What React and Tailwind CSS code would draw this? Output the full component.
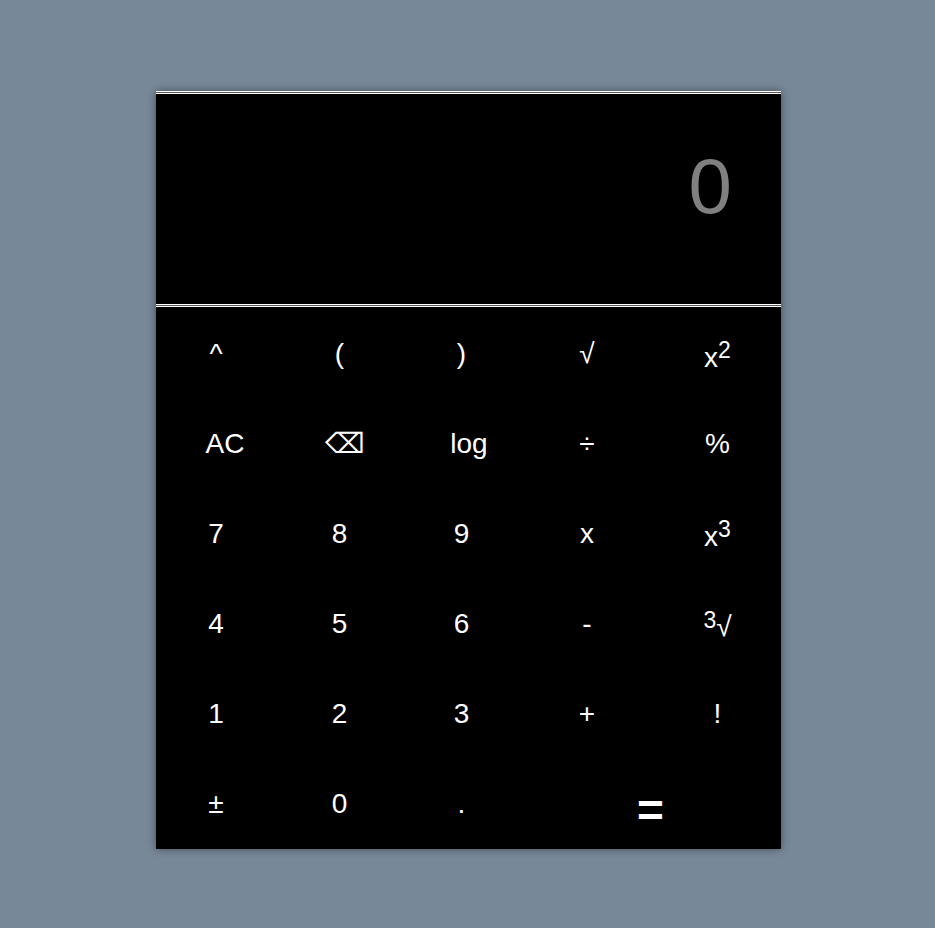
import React from 'react';

const keys = [
    { label: '^' },
    { label: '(' },
    { label: ')' },
    { label: '√' },
    { label: 'x', sup: '2', cls: 'pt-[8px]' },
    { label: 'AC', cls: 'pl-[18px]' },
    { label: '⌫', cls: 'pl-[11px]' },
    { label: 'log', cls: 'pl-[15px]' },
    { label: '÷' },
    { label: '%' },
    { label: '7' },
    { label: '8' },
    { label: '9' },
    { label: 'x' },
    { label: 'x', sup: '3', cls: 'pt-[6px]' },
    { label: '4' },
    { label: '5' },
    { label: '6' },
    { label: '-' },
    { pre: '3', label: '√', cls: 'pt-[6px]' },
    { label: '1' },
    { label: '2' },
    { label: '3' },
    { label: '+' },
    { label: '!' },
    { label: '±' },
    { label: '0' },
    { label: '.' },
];

const Key = ({ k }) => (
    <button className={`flex items-center justify-center text-white text-[28px] ${k.cls || ''}`}>
        <span>
            {k.pre && <sup className="text-[23px] top-[-0.35em]">{k.pre}</sup>}
            {k.label}
            {k.sup && <sup className="text-[23px] top-[-0.4em]">{k.sup}</sup>}
        </span>
    </button>
);

const App = () => {
    return (
        <div className="min-h-[928px] bg-[#778899] pt-[91px] font-['Liberation_Sans',Arial,sans-serif]">
            <div className="ml-[156px] w-[625px] bg-black shadow-[0_0_8px_rgba(0,0,0,0.45)]">
                <div className="h-[3px] border-y border-white bg-[#555]" />
                <div className="h-[210px] pt-[53px] pr-[49px] text-right text-[78px] leading-none text-[#808080]">
                    0
                </div>
                <div className="h-[3px] border-y border-white bg-[#555]" />
                <div className="grid grid-cols-[120px_127px_117px_134px_127px] auto-rows-[90px] pt-[2px]">
                    {keys.map((k, i) => (
                        <Key key={i} k={k} />
                    ))}
                    <button className="col-span-2 flex items-center justify-center pt-[12px] text-white text-[46px] font-bold">
                        =
                    </button>
                </div>
            </div>
        </div>
    );
};

export default App;
